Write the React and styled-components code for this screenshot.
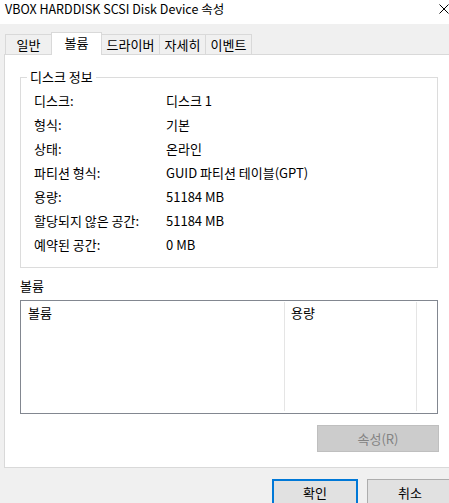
import styled, { createGlobalStyle } from "styled-components";

const GlobalStyle = createGlobalStyle`
  html, body {
    margin: 0;
    padding: 0;
    overflow: hidden;
    background: #f0f0f0;
  }
  body {
    font-family: "Noto Sans CJK KR", "Noto Sans", sans-serif;
    font-size: 13px;
    color: #000;
  }
`;

const diskInfo = [
  ["디스크:", "디스크 1"],
  ["형식:", "기본"],
  ["상태:", "온라인"],
  ["파티션 형식:", "GUID 파티션 테이블(GPT)"],
  ["용량:", "51184 MB"],
  ["할당되지 않은 공간:", "51184 MB"],
  ["예약된 공간:", "0 MB"],
];

const tabs = [
  { label: "일반", width: 47 },
  { label: "볼륨", width: 51, active: true },
  { label: "드라이버", width: 59 },
  { label: "자세히", width: 47 },
  { label: "이벤트", width: 47 },
];

const App = () => {
  return (
    <Window>
      <GlobalStyle />
      <TitleBar>
        <Title>VBOX HARDDISK SCSI Disk Device 속성</Title>
        <CloseButton>
          <svg width="10" height="10" viewBox="0 0 10 10">
            <path d="M0.5 0.5 L9.5 9.5 M9.5 0.5 L0.5 9.5" stroke="#000" strokeWidth="1" />
          </svg>
        </CloseButton>
      </TitleBar>

      <Body>
        <TabStrip>
          {tabs.map((t) => (
            <Tab key={t.label} $width={t.width} $active={t.active}>
              {t.label}
            </Tab>
          ))}
        </TabStrip>

        <Panel>
          <GroupBox>
            <Legend>디스크 정보</Legend>
            <InfoGrid>
              {diskInfo.map(([k, v]) => (
                <InfoRow key={k}>
                  <span>{k}</span>
                  <span>{v}</span>
                </InfoRow>
              ))}
            </InfoGrid>
          </GroupBox>

          <SectionLabel>볼륨</SectionLabel>
          <ListBox>
            <Column $width={264}>볼륨</Column>
            <Column $width={132} $pad={6}>용량</Column>
          </ListBox>

          <ButtonRow>
            <DisabledButton disabled>속성(R)</DisabledButton>
          </ButtonRow>
        </Panel>

        <Footer>
          <DialogButton $primary>확인</DialogButton>
          <DialogButton>취소</DialogButton>
        </Footer>
      </Body>
    </Window>
  );
};

const Window = styled.div`
  width: 470px;
  height: 503px;
  overflow: hidden;
  background: #f0f0f0;
`;

const TitleBar = styled.div`
  height: 24px;
  background: #fff;
  display: flex;
  justify-content: space-between;
  align-items: flex-start;
  box-sizing: border-box;
  padding: 1px 0 0 5px;
`;

const Title = styled.div`
  line-height: 16px;
  font-size: 12.5px;
  white-space: nowrap;
`;

const CloseButton = styled.div`
  width: 32px;
  padding-top: 3px;
  display: flex;
  svg {
    display: block;
    margin-left: 1px;
  }
`;

const Body = styled.div`
  padding: 8px 0 0 4px;
`;

const TabStrip = styled.div`
  display: flex;
  align-items: flex-end;
  height: 22px;
  margin-left: 1px;
`;

const Tab = styled.div`
  width: ${({ $width }) => $width}px;
  height: ${({ $active }) => ($active ? 23 : 20)}px;
  margin-bottom: ${({ $active }) => ($active ? -1 : 0)}px;
  margin-left: -1px;
  &:first-child {
    margin-left: 0;
  }
  box-sizing: border-box;
  border: 1px solid #d9d9d9;
  border-bottom: none;
  background: ${({ $active }) => ($active ? "#fff" : "#f0f0f0")};
  position: relative;
  z-index: ${({ $active }) => ($active ? 2 : 1)};
  display: flex;
  justify-content: center;
  align-items: center;
  padding-bottom: ${({ $active }) => ($active ? 3 : 0)}px;
  line-height: 16px;
  white-space: nowrap;
`;

const Panel = styled.div`
  background: #fff;
  border: 1px solid #d9d9d9;
  border-right: none;
  padding: 14px 0 15px 15px;
`;

const GroupBox = styled.fieldset`
  width: 418px;
  box-sizing: border-box;
  margin: 0;
  padding: 0;
  border: 1px solid #dcdcdc;
`;

const Legend = styled.legend`
  margin-left: 6px;
  padding: 0 3px;
  line-height: 16px;
`;

const InfoGrid = styled.div`
  padding: 4px 0 10px 13px;
`;

const InfoRow = styled.div`
  display: grid;
  grid-template-columns: 132px 1fr;
  height: 24px;
  align-items: center;
  line-height: 16px;
  white-space: nowrap;
`;

const SectionLabel = styled.div`
  margin-top: 10px;
  line-height: 16px;
  margin-bottom: 6px;
`;

const ListBox = styled.div`
  width: 418px;
  height: 114px;
  box-sizing: border-box;
  border: 1px solid #828790;
  display: flex;
`;

const Column = styled.div`
  width: ${({ $width }) => $width}px;
  box-sizing: border-box;
  margin: 1px 0 2px;
  border-right: 1px solid #e5e5e5;
  padding: 3px 0 0 ${({ $pad }) => $pad ?? 7}px;
  line-height: 16px;
`;

const ButtonRow = styled.div`
  width: 419px;
  display: flex;
  justify-content: flex-end;
  margin-top: 11px;
`;

const DisabledButton = styled.button`
  width: 122px;
  height: 27px;
  box-sizing: border-box;
  background: #cccccc;
  border: 1px solid #bfbfbf;
  color: #838383;
  font: inherit;
  padding: 0;
`;

const Footer = styled.div`
  display: flex;
  gap: 9px;
  padding: 11px 0 0 268px;
`;

const DialogButton = styled.button`
  width: 86px;
  height: 26px;
  box-sizing: border-box;
  background: #e1e1e1;
  border: ${({ $primary }) => ($primary ? "2px solid #0078d7" : "1px solid #adadad")};
  font: inherit;
  color: #000;
  padding: 0;
`;

export default App;
